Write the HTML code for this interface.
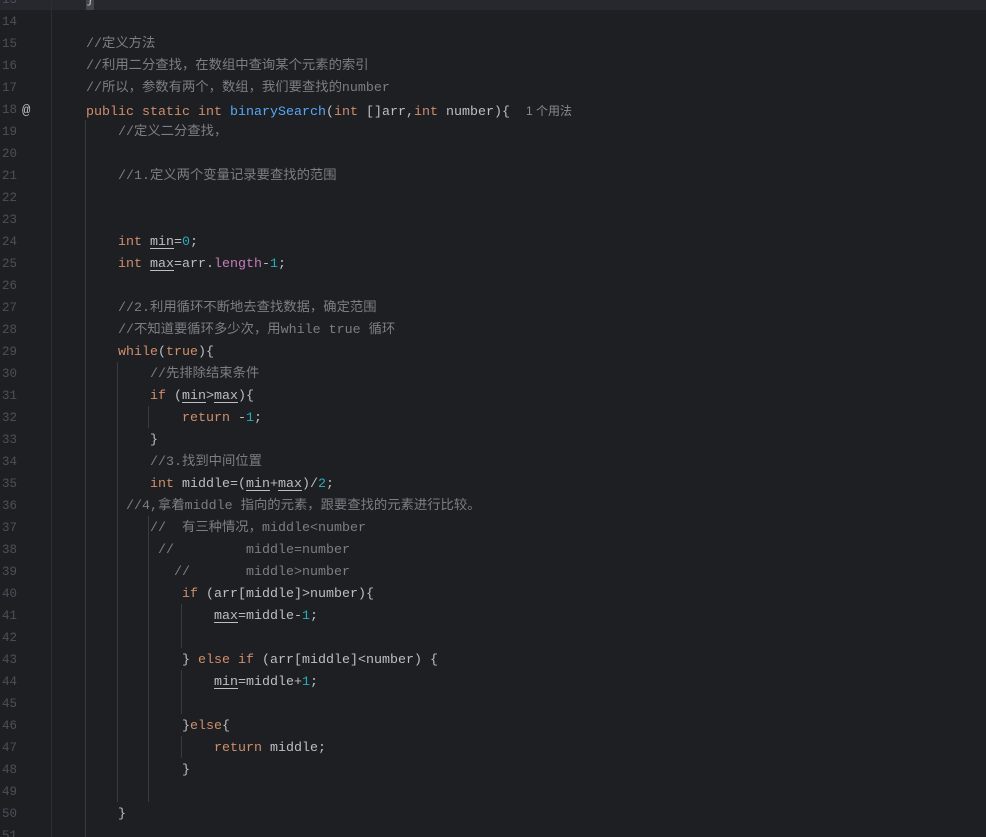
<!DOCTYPE html>
<html><head><meta charset="utf-8"><style>
html,body{margin:0;padding:0;background:#1e1f22;width:986px;height:837px;overflow:hidden;position:relative}
.l{position:absolute;height:22px;line-height:22px;padding-top:2px;font-family:"Liberation Mono","Noto Sans CJK SC",monospace;font-size:13.33px;color:#bcbec4;white-space:pre}
.n{position:absolute;left:2px;width:20px;height:22px;line-height:22px;padding-top:1px;font-family:"Liberation Mono",monospace;font-size:12.5px;color:#4b5059}
.k{color:#cf8e6d}.c{color:#7a7e85}.d{color:#2aacb8}.m{color:#56a8f5}.f{color:#c77dbb}.h{color:#868a91;font-family:"Liberation Sans","Noto Sans CJK SC",sans-serif;font-size:12px}
.u{text-decoration:underline;text-underline-offset:3px}
.g{position:absolute;width:1px;background:#393b40}
</style></head><body>
<div style="position:absolute;left:0;top:0;width:986px;height:10px;background:#26282e"></div>
<div style="position:absolute;left:86px;top:0;width:8px;height:10px;background:#43454a"></div>
<div class="g" style="left:51px;top:0;height:837px;background:#2b2d30"></div>
<div class="g" style="left:85px;top:120px;height:717px"></div>
<div class="g" style="left:117px;top:362px;height:440px"></div>
<div class="g" style="left:148px;top:516px;height:286px"></div>
<div class="g" style="left:181px;top:604px;height:44px"></div>
<div class="g" style="left:181px;top:670px;height:44px"></div>
<div class="g" style="left:181px;top:736px;height:22px"></div>
<div class="g" style="left:148px;top:406px;height:22px"></div>

<div class="n" style="top:-12px">13</div>
<div class="l" style="top:-12px;left:86px">}</div>
<div class="n" style="top:10px">14</div>
<div class="n" style="top:32px">15</div><div class="l c" style="top:32px;left:86px">//定义方法</div>
<div class="n" style="top:54px">16</div><div class="l c" style="top:54px;left:86px">//利用二分查找，在数组中查询某个元素的索引</div>
<div class="n" style="top:76px">17</div><div class="l c" style="top:76px;left:86px">//所以，参数有两个，数组，我们要查找的number</div>
<div class="n" style="top:98px">18</div><div class="l" style="top:98px;left:22px;color:#bcbec4;font-size:14px">@</div>
<div class="l" style="top:98px;left:86px"><span class="k">public static int </span><span class="m">binarySearch</span>(<span class="k">int </span>[]arr,<span class="k">int </span>number){  <span class="h">1 个用法</span></div>
<div class="n" style="top:120px">19</div><div class="l c" style="top:120px;left:118px">//定义二分查找，</div>
<div class="n" style="top:142px">20</div>
<div class="n" style="top:164px">21</div><div class="l c" style="top:164px;left:118px">//1.定义两个变量记录要查找的范围</div>
<div class="n" style="top:186px">22</div>
<div class="n" style="top:208px">23</div>
<div class="n" style="top:230px">24</div><div class="l" style="top:230px;left:118px"><span class="k">int </span><span class="u">min</span>=<span class="d">0</span>;</div>
<div class="n" style="top:252px">25</div><div class="l" style="top:252px;left:118px"><span class="k">int </span><span class="u">max</span>=arr.<span class="f">length</span>-<span class="d">1</span>;</div>
<div class="n" style="top:274px">26</div>
<div class="n" style="top:296px">27</div><div class="l c" style="top:296px;left:118px">//2.利用循环不断地去查找数据，确定范围</div>
<div class="n" style="top:318px">28</div><div class="l c" style="top:318px;left:118px">//不知道要循环多少次，用while true 循环</div>
<div class="n" style="top:340px">29</div><div class="l" style="top:340px;left:118px"><span class="k">while</span>(<span class="k">true</span>){</div>
<div class="n" style="top:362px">30</div><div class="l c" style="top:362px;left:150px">//先排除结束条件</div>
<div class="n" style="top:384px">31</div><div class="l" style="top:384px;left:150px"><span class="k">if </span>(<span class="u">min</span>&gt;<span class="u">max</span>){</div>
<div class="n" style="top:406px">32</div><div class="l" style="top:406px;left:182px"><span class="k">return </span>-<span class="d">1</span>;</div>
<div class="n" style="top:428px">33</div><div class="l" style="top:428px;left:150px">}</div>
<div class="n" style="top:450px">34</div><div class="l c" style="top:450px;left:150px">//3.找到中间位置</div>
<div class="n" style="top:472px">35</div><div class="l" style="top:472px;left:150px"><span class="k">int </span>middle=(<span class="u">min</span>+<span class="u">max</span>)/<span class="d">2</span>;</div>
<div class="n" style="top:494px">36</div><div class="l c" style="top:494px;left:126px">//4,拿着middle 指向的元素，跟要查找的元素进行比较。</div>
<div class="n" style="top:516px">37</div><div class="l c" style="top:516px;left:150px">//  有三种情况，middle&lt;number</div>
<div class="n" style="top:538px">38</div><div class="l c" style="top:538px;left:158px">//         middle=number</div>
<div class="n" style="top:560px">39</div><div class="l c" style="top:560px;left:174px">//       middle&gt;number</div>
<div class="n" style="top:582px">40</div><div class="l" style="top:582px;left:182px"><span class="k">if </span>(arr[middle]&gt;number){</div>
<div class="n" style="top:604px">41</div><div class="l" style="top:604px;left:214px"><span class="u">max</span>=middle-<span class="d">1</span>;</div>
<div class="n" style="top:626px">42</div>
<div class="n" style="top:648px">43</div><div class="l" style="top:648px;left:182px">} <span class="k">else if </span>(arr[middle]&lt;number) {</div>
<div class="n" style="top:670px">44</div><div class="l" style="top:670px;left:214px"><span class="u">min</span>=middle+<span class="d">1</span>;</div>
<div class="n" style="top:692px">45</div>
<div class="n" style="top:714px">46</div><div class="l" style="top:714px;left:182px">}<span class="k">else</span>{</div>
<div class="n" style="top:736px">47</div><div class="l" style="top:736px;left:214px"><span class="k">return </span>middle;</div>
<div class="n" style="top:758px">48</div><div class="l" style="top:758px;left:182px">}</div>
<div class="n" style="top:780px">49</div>
<div class="n" style="top:802px">50</div><div class="l" style="top:802px;left:118px">}</div>
<div class="n" style="top:824px">51</div>
</body></html>
